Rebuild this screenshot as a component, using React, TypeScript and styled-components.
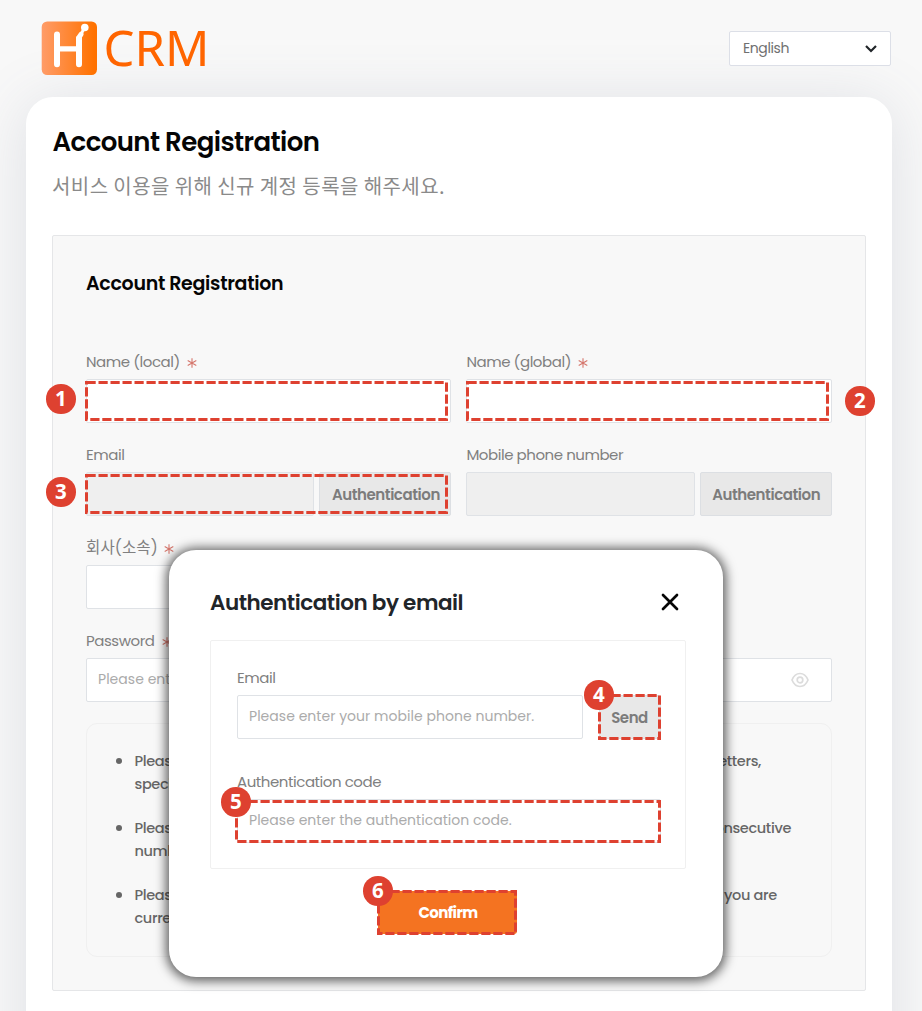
import React from "react";
import styled, { createGlobalStyle } from "styled-components";

const GlobalStyle = createGlobalStyle`
  * { box-sizing: border-box; }
  body {
    margin: 0;
    background: #f8f8f8;
    font-family: Poppins, Inter, "Noto Sans CJK KR", sans-serif;
    overflow: hidden;
  }
  button { font: inherit; }
`;

const RED = "#de4130";

const Page = styled.div`
  position: relative;
  height: 1011px;
  overflow: hidden;
  padding: 0 30.5px 0 26px;
  background: #f8f8f8;
`;

const Header = styled.header`
  display: flex;
  justify-content: space-between;
  height: 97px;
  padding: 20px 0.5px 0 15px;
`;

const Logo = styled.div`
  display: flex;
  height: 58px;
  gap: 6px;
  svg { display: block; }
`;

const LogoText = styled.span`
  margin-left: -1.5px;
  font: 400 49px/54px "Noto Sans", sans-serif;
  letter-spacing: 0;
  color: #ff6500;
`;

const Language = styled.div`
  position: relative;
  z-index: 1;
  display: flex;
  align-items: center;
  justify-content: space-between;
  width: 162px;
  height: 35px;
  margin-top: 11px;
  padding: 0 12px 0 13px;
  background: #fff;
  border: 1px solid #dcdfe7;
  border-radius: 2px;
  color: #707070;
  font-size: 14px;
  letter-spacing: -0.4px;
`;

const Card = styled.main`
  height: 1100px;
  padding: 26px 25.5px 0 26px;
  background: #fff;
  border-radius: 27px;
  box-shadow: 0 6px 60px rgba(95, 105, 135, 0.17);
`;

const Title = styled.h1`
  margin: 0 0 0 0.5px;
  font-size: 26px;
  font-weight: 600;
  line-height: 39px;
  letter-spacing: -0.57px;
  color: #050505;
`;

const Subtitle = styled.p`
  margin: 9px 0 0;
  font-family: "Noto Sans CJK KR", sans-serif;
  font-size: 20px;
  line-height: 30px;
  letter-spacing: 0.42px;
  color: #8a8a8a;
`;

const Panel = styled.section`
  height: 756px;
  margin-top: 34px;
  padding: 34px 32px 0 33px;
  background: #f8f8f8;
  border: 1px solid #e5e6e8;
  border-radius: 2px;
`;

const PanelTitle = styled.h2`
  margin: 0 0 45px;
  font-size: 19px;
  font-weight: 600;
  line-height: 28px;
  letter-spacing: -0.3px;
  color: #050505;
`;

const Grid = styled.div`
  display: grid;
  grid-template-columns: 365.4px 365.3px;
  column-gap: 15px;
  row-gap: 13px;
`;

const Field = styled.div<{ $wide?: boolean; $grow?: boolean }>`
  display: flex;
  flex-direction: column;
  flex: ${(p) => (p.$grow ? 1 : "none")};
  grid-column: ${(p) => (p.$wide ? "1 / -1" : "auto")};
`;

const Label = styled.label<{ $korean?: boolean }>`
  display: flex;
  align-items: center;
  height: 36px;
  padding-top: 2px;
  gap: ${(p) => (p.$korean ? 6 : 7)}px;
  font-size: ${(p) => (p.$korean ? "15.5px" : "15px")};
  line-height: 24px;
  letter-spacing: ${(p) => (p.$korean ? "0.12px" : "-0.45px")};
  color: #808080;
`;

const Control = styled.div`
  position: relative;
  display: flex;
  gap: 5px;
`;

const Box = styled.div<{ $off?: boolean }>`
  display: flex;
  flex: 1;
  align-items: center;
  justify-content: space-between;
  height: 44px;
  padding: 0 22px 1px 11px;
  background: ${(p) => (p.$off ? "#efefef" : "#fff")};
  border: 1px solid #dfe2e6;
  border-radius: 2px;
  font-size: 14px;
  letter-spacing: 0.03px;
  color: #ababab;
`;

const GreyButton = styled.button<{ $width: number }>`
  width: ${(p) => p.$width}px;
  height: 44px;
  padding: 0 0 0 1px;
  background: #e8e8e8;
  border: 1px solid #dcdfe3;
  border-radius: 2px;
  font-size: 15px;
  font-weight: 600;
  letter-spacing: -0.45px;
  color: #7c7c7c;
`;

const SendButton = styled(GreyButton)`
  padding: 0 1px 0 0;
`;

const Notice = styled.ul`
  display: flex;
  flex-direction: column;
  gap: 21px;
  height: 234px;
  margin: 21px 0.8px 0 0;
  padding: 26px 0 0 47.5px;
  border: 1px solid #f0f0f0;
  border-radius: 11px;
  list-style: none;
  font-size: 14.5px;
  font-weight: 500;
  line-height: 23px;
  letter-spacing: -0.35px;
  color: #666;
`;

const NoticeItem = styled.li`
  position: relative;
  &::before {
    content: "";
    position: absolute;
    left: -19px;
    top: 8px;
    width: 6px;
    height: 6px;
    border-radius: 50%;
    background: #666;
  }
`;

const NoticeLine = styled.div<{ $width: number }>`
  display: flex;
  justify-content: space-between;
  width: ${(p) => p.$width}px;
  white-space: nowrap;
`;

const Modal = styled.div`
  position: absolute;
  left: 169px;
  top: 550px;
  width: 554px;
  height: 427px;
  padding: 36px 37px 0 41px;
  background: #fff;
  border-radius: 27px;
  box-shadow: 0 1px 11px 3px rgba(0, 0, 0, 0.62);
`;

const ModalHead = styled.div`
  display: flex;
  align-items: center;
  justify-content: space-between;
  height: 32px;
  padding-right: 6px;
`;

const ModalTitle = styled.h3`
  margin: 0;
  font-size: 21.5px;
  font-weight: 600;
  letter-spacing: -0.47px;
  color: #212529;
`;

const ModalPanel = styled.div`
  width: 476.4px;
  height: 229px;
  margin-top: 22px;
  padding: 18px 24.4px 0 26px;
  border: 1px solid #f0f0f0;
  border-radius: 2px;
`;

const ModalRow = styled.div`
  display: flex;
  gap: 16px;
  margin-bottom: 24px;
`;

const ConfirmWrap = styled.div`
  position: relative;
  width: 139px;
  height: 43px;
  margin: 22px 0 0 168px;
`;

const ConfirmButton = styled.button`
  width: 139px;
  height: 43px;
  padding: 0 0 0 1px;
  border: 0;
  border-radius: 3px;
  background: #f47321;
  color: #fff;
  font-size: 15px;
  font-weight: 700;
  letter-spacing: -0.6px;
`;

const Outline = styled.svg`
  display: block;
  width: 100%;
  height: 100%;
  overflow: visible;
  rect {
    x: 1.5px;
    y: 1.5px;
    width: calc(100% - 3px);
    height: calc(100% - 3px);
    fill: none;
    stroke: ${RED};
    stroke-width: 3px;
    stroke-dasharray: 9.2 2.8;
  }
`;

const OutlineHolder = styled.div<{ $x: number; $y: number; $w: number; $h: number }>`
  position: absolute;
  left: ${(p) => p.$x}px;
  top: ${(p) => p.$y}px;
  width: ${(p) => p.$w}px;
  height: ${(p) => p.$h}px;
`;

const Badge = styled.span<{ $x: number; $y: number }>`
  position: absolute;
  left: ${(p) => p.$x}px;
  top: ${(p) => p.$y}px;
  width: 29.5px;
  height: 29.5px;
  border-radius: 50%;
  background: ${RED};
  color: #fff;
  font: 700 20.5px/29.5px "Noto Sans", sans-serif;
  letter-spacing: 0;
  text-align: center;
`;

interface CalloutProps { n: number; x: number; y: number; w: number; h: number; bx: number; by: number }

/* Dashed outline with a numbered badge; the badge is placed relative to the outline. */
const Callout = ({ n, x, y, w, h, bx, by }: CalloutProps) => (
  <OutlineHolder $x={x} $y={y} $w={w} $h={h}>
    <Outline><rect /></Outline>
    <Badge $x={bx} $y={by}>{n}</Badge>
  </OutlineHolder>
);

const Star = styled.svg`
  display: block;
  margin-top: 1px;
`;

const Required = () => (
  <Star width="10" height="10" viewBox="0 0 10 10">
    <path d="M5 0.3v9.4M0.7 2.6l8.6 4.8M9.3 2.6L0.7 7.4" stroke="#d5766c" strokeWidth="1.1" fill="none" />
  </Star>
);

const notices = [
  { head: "Please", tail: "letters,", rest: "special", width: 626.5 },
  { head: "Please", tail: "consecutive", rest: "numbers.", width: 656.5 },
  { head: "Please", tail: "you are", rest: "currently", width: 642.3 },
];

export default function App() {
  return (
    <Page>
      <GlobalStyle />
      <Header>
        <Logo>
          <svg width="58" height="58" viewBox="41 20 58 58">
            <defs>
              <linearGradient id="tile" x1="0" x2="1">
                <stop offset="0" stopColor="#ff9c68" />
                <stop offset="0.95" stopColor="#ff7200" />
              </linearGradient>
            </defs>
            <rect x="41.7" y="21.4" width="55.3" height="53.6" rx="5.5" fill="url(#tile)" />
            <g stroke="#fff" fill="none" strokeLinecap="round" strokeLinejoin="round">
              <path d="M57 34.6V64.2M79 64.2V38.5" strokeWidth="6" />
              <path d="M57 48.9H79" strokeWidth="5.2" />
              <path d="M78.6 38L81 34.4" strokeWidth="5" />
              <path d="M80.8 34.4L84.7 27.6" strokeWidth="3" />
            </g>
            <circle cx="84.8" cy="27.5" r="3.8" fill="#fff" />
          </svg>
          <LogoText>CRM</LogoText>
        </Logo>
        <Language>
          English
          <svg width="14" height="10" viewBox="0 0 14 10">
            <path d="M2 2l5 5 5-5" fill="none" stroke="#212529" strokeWidth="2.2" />
          </svg>
        </Language>
      </Header>
      <Card>
        <Title>Account Registration</Title>
        <Subtitle>서비스 이용을 위해 신규 계정 등록을 해주세요.</Subtitle>
        <Panel>
          <PanelTitle>Account Registration</PanelTitle>
          <Grid>
            <Field>
              <Label>Name (local)<Required /></Label>
              <Control>
                <Box />
                <Callout n={1} x={-1} y={2} w={363} h={40} bx={-39} by={3} />
              </Control>
            </Field>
            <Field>
              <Label>Name (global)<Required /></Label>
              <Control>
                <Box />
                <Callout n={2} x={-0.4} y={2} w={363} h={40} bx={379} by={5} />
              </Control>
            </Field>
            <Field>
              <Label>Email</Label>
              <Control>
                <Box $off />
                <GreyButton $width={132}>Authentication</GreyButton>
                <Callout n={3} x={-1} y={2} w={363} h={40} bx={-39} by={3} />
              </Control>
            </Field>
            <Field>
              <Label>Mobile phone number</Label>
              <Control>
                <Box $off />
                <GreyButton $width={132}>Authentication</GreyButton>
              </Control>
            </Field>
            <Field>
              <Label $korean>회사(소속)<Required /></Label>
              <Control><Box /></Control>
            </Field>
            <Field $wide>
              <Label>Password<Required /></Label>
              <Control>
                <Box>
                  Please enter
                  <svg width="18" height="16" viewBox="0 0 18 16" fill="none" stroke="#dcdcdc" strokeWidth="1.7">
                    <path d="M1 8C2.8 3.6 5.6 1.5 9 1.5S15.2 3.6 17 8C15.2 12.4 12.4 14.5 9 14.5S2.8 12.4 1 8Z" />
                    <circle cx="9" cy="8" r="2.8" />
                  </svg>
                </Box>
              </Control>
            </Field>
          </Grid>
          <Notice>
            {notices.map((n) => (
              <NoticeItem key={n.rest}>
                <NoticeLine $width={n.width}><span>{n.head}</span><span>{n.tail}</span></NoticeLine>
                <div>{n.rest}</div>
              </NoticeItem>
            ))}
          </Notice>
        </Panel>
      </Card>
      <Modal>
        <ModalHead>
          <ModalTitle>Authentication by email</ModalTitle>
          <svg width="20" height="20" viewBox="0 0 20 20">
            <path d="M3 3l14 14M17 3L3 17" stroke="#050505" strokeWidth="2.7" strokeLinecap="round" />
          </svg>
        </ModalHead>
        <ModalPanel>
          <ModalRow>
            <Field $grow>
              <Label>Email</Label>
              <Control><Box>Please enter your mobile phone number.</Box></Control>
            </Field>
            <Field>
              <Label />
              <Control>
                <SendButton $width={62}>Send</SendButton>
                <Callout n={4} x={-1} y={-1} w={63} h={46} bx={-14} by={-14} />
              </Control>
            </Field>
          </ModalRow>
          <Field>
            <Label>Authentication code</Label>
            <Control>
              <Box>Please enter the authentication code.</Box>
              <Callout n={5} x={-2} y={1} w={426} h={43} bx={-14} by={-13} />
            </Control>
          </Field>
        </ModalPanel>
        <ConfirmWrap>
          <ConfirmButton>Confirm</ConfirmButton>
          <Callout n={6} x={-1} y={-1} w={140} h={45} bx={-14} by={-14} />
        </ConfirmWrap>
      </Modal>
    </Page>
  );
}
